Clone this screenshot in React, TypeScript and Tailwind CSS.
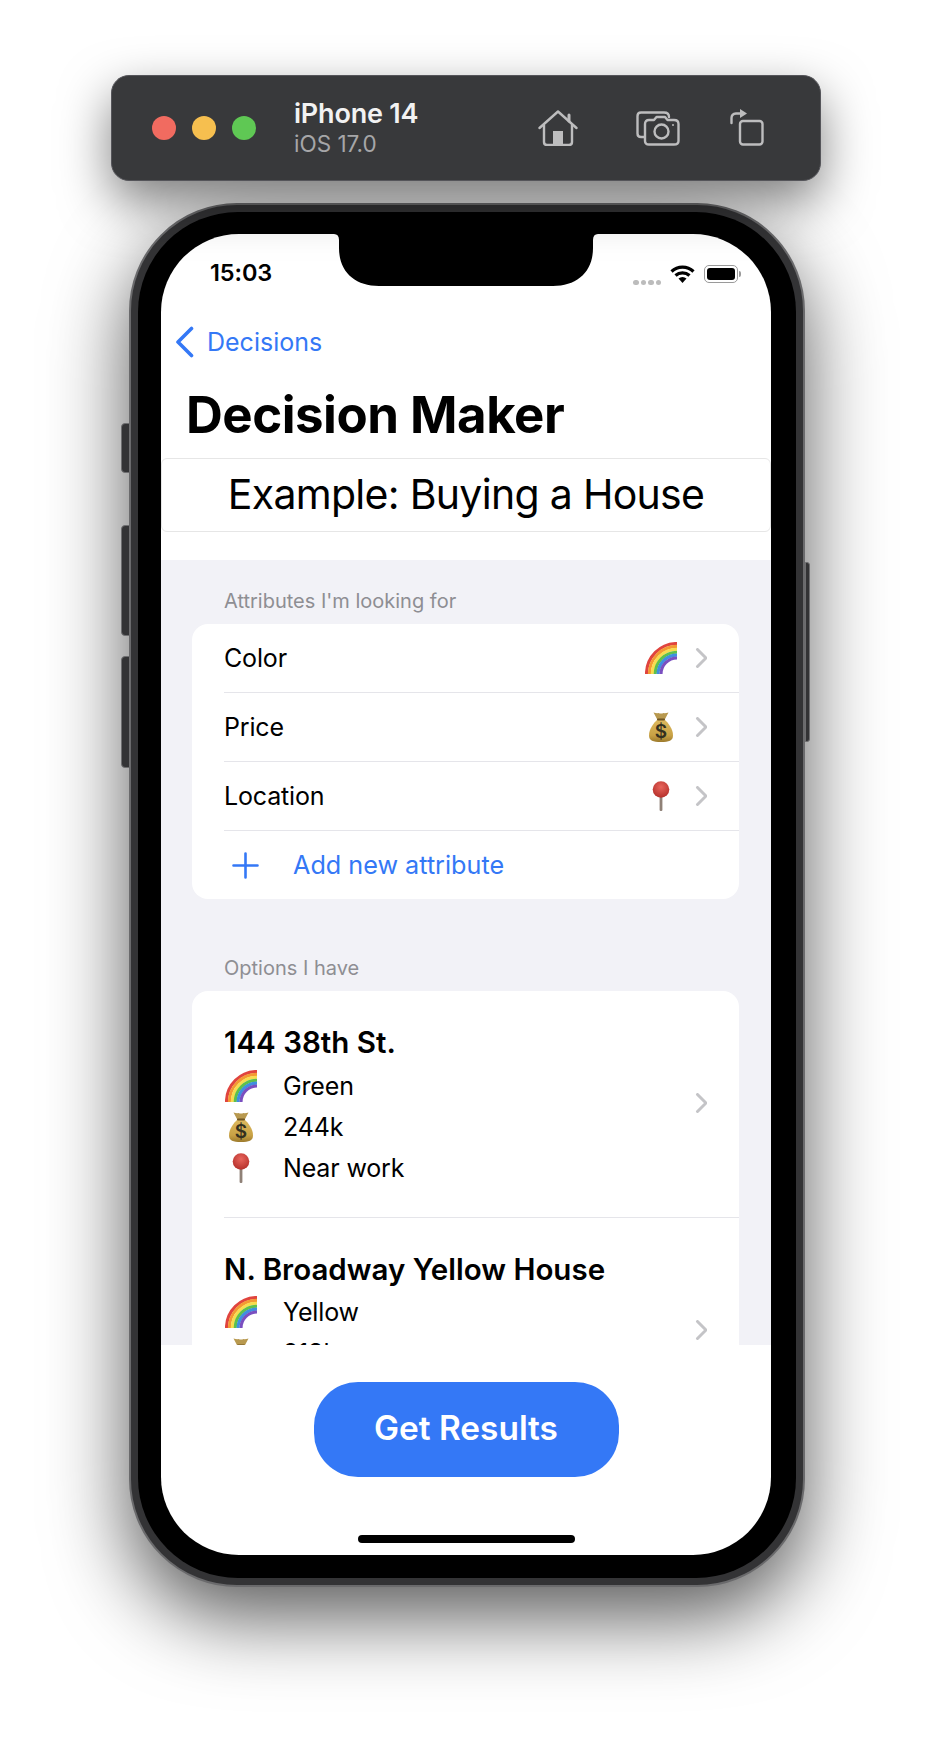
const BLUE = '#3478f6';

function Rainbow({ size = 32 }: { size?: number }) {
  const bands = ['#e0443e', '#f39a32', '#f7dc4f', '#5fc14b', '#3f8fe0', '#7a4fc0'];
  return (
    <svg width={size} height={size} viewBox="0 0 32 32" fill="none">
      {bands.map((color, i) => (
        <path
          key={color}
          d={`M${1.5 + i * 2.9} 32 A${30.5 - i * 2.9} ${30.5 - i * 2.9} 0 0 1 32 ${1.5 + i * 2.9}`}
          stroke={color}
          strokeWidth="3.1"
        />
      ))}
    </svg>
  );
}

function MoneyBag() {
  return (
    <svg width="24" height="30" viewBox="0 0 24 30">
      <defs>
        <linearGradient id="bag" x1="0" y1="0" x2="0" y2="1">
          <stop offset="0" stopColor="#dcb95f" />
          <stop offset="0.7" stopColor="#c9a245" />
          <stop offset="1" stopColor="#9c7a2c" />
        </linearGradient>
      </defs>
      <path d="M4.5 0.5 Q8 1.5 9.5 1 Q12 2 14.5 1 Q16 1.5 19.5 0.5 L15.5 8 L8.5 8 Z" fill="#b8994f" />
      <path d="M8.5 7.5 L15.5 7.5 C19.5 11 24 17 24 23.5 C24 28.5 20 30 12 30 C4 30 0 28.5 0 23.5 C0 17 4.5 11 8.5 7.5 Z" fill="url(#bag)" />
      <rect x="8" y="6.6" width="8" height="2" rx="1" fill="#6f5522" />
      <text x="12" y="26" textAnchor="middle" fontSize="19" fontWeight="600" fill="#33301f" fontFamily="Inter, sans-serif">$</text>
    </svg>
  );
}

function Pin() {
  return (
    <svg width="18" height="30" viewBox="0 0 18 30">
      <defs>
        <radialGradient id="pin" cx="0.5" cy="0.35" r="0.65">
          <stop offset="0" stopColor="#e8655c" />
          <stop offset="1" stopColor="#b5302b" />
        </radialGradient>
      </defs>
      <rect x="7.6" y="14" width="2.8" height="16" rx="1" fill="#8f8177" />
      <circle cx="9" cy="8.5" r="8.3" fill="url(#pin)" />
    </svg>
  );
}

function Chevron() {
  return (
    <svg width="12" height="20" viewBox="0 0 12 20" fill="none" className="shrink-0">
      <path d="M2.5 1.5 L11 10 L2.5 18.5" stroke="#c4c4c7" strokeWidth="3" strokeLinecap="round" strokeLinejoin="round" />
    </svg>
  );
}

function HomeIcon() {
  return (
    <svg width="40" height="36" viewBox="0 0 40 36" fill="none" stroke="#bdbdbe" strokeWidth="2.4" strokeLinecap="round" strokeLinejoin="round">
      <path d="M1.5 18 L20 1.5 L38.5 18" />
      <path d="M31 5 V11" strokeWidth="3" />
      <path d="M6 15 V32 Q6 35 9 35 H31 Q34 35 34 32 V15" />
      <rect x="15" y="21" width="10" height="13" fill="#bdbdbe" stroke="none" />
    </svg>
  );
}

function CameraIcon() {
  return (
    <svg width="44" height="35" viewBox="0 0 44 35" fill="none" stroke="#bdbdbe" strokeWidth="2.4" strokeLinecap="round" strokeLinejoin="round">
      <path d="M8 26 H5 Q1.5 26 1.5 22.5 V5 Q1.5 1.5 5 1.5 H28 Q33 1.5 33 6" />
      <path d="M13 9 H18 L20.5 6 H29 L31.5 9 H38 Q42.5 9 42.5 13 V30 Q42.5 33.5 38 33.5 H13 Q9 33.5 9 30 V13 Q9 9 13 9 Z" />
      <circle cx="25.5" cy="20.5" r="7" />
      <circle cx="37" cy="14" r="1" fill="#bdbdbe" stroke="none" />
    </svg>
  );
}

function RotateIcon() {
  return (
    <svg width="34" height="38" viewBox="0 0 34 38" fill="none" stroke="#bdbdbe" strokeWidth="2.4" strokeLinecap="round" strokeLinejoin="round">
      <rect x="10" y="13" width="22.5" height="23.5" rx="3" />
      <path d="M1.5 15 V10 Q1.5 6 6 5.5 H11" />
      <path d="M10 1 L17 5.5 L10 10 Z" fill="#bdbdbe" stroke="none" />
    </svg>
  );
}

function Toolbar() {
  return (
    <div className="relative z-10 flex h-[106px] w-[710px] items-center rounded-[18px] border border-[#55555a] bg-[#38393b] pl-[40px] shadow-[0_20px_50px_rgba(0,0,0,0.5)]">
      <div className="flex gap-4">
        <div className="size-6 rounded-full bg-[#f16b60]" />
        <div className="size-6 rounded-full bg-[#f6bf4f]" />
        <div className="size-6 rounded-full bg-[#5fc854]" />
      </div>
      <div className="ml-[38px] flex w-[130px] flex-col">
        <span className="text-[27px] leading-[32px] font-semibold tracking-[-0.2px] text-[#f2f2f2]">iPhone 14</span>
        <span className="text-[22.5px] leading-[28px] text-[#a6a6a8]">iOS 17.0</span>
      </div>
      <div className="ml-[114px]"><HomeIcon /></div>
      <div className="ml-[58px]"><CameraIcon /></div>
      <div className="-mt-[3px] ml-[50px]"><RotateIcon /></div>
    </div>
  );
}

function SideButtons() {
  return (
    <>
      <div className="absolute top-[218px] -left-[10px] h-[50px] w-[9px] rounded-l-[4px] border border-[#6e6e70] bg-[#333335]" />
      <div className="absolute top-[320px] -left-[10px] h-[111px] w-[9px] rounded-l-[4px] border border-[#6e6e70] bg-[#333335]" />
      <div className="absolute top-[451px] -left-[10px] h-[112px] w-[9px] rounded-l-[4px] border border-[#6e6e70] bg-[#333335]" />
      <div className="absolute top-[357px] -right-[7px] h-[180px] w-[5px] rounded-r-[3px] border border-[#6e6e70] bg-[#333335]" />
    </>
  );
}

function StatusBar() {
  return (
    <div className="flex h-[65px] shrink-0 items-end justify-between pr-[30px] pl-[49px]">
      <span className="mb-[12px] text-[23.5px] leading-[28px] font-semibold tracking-[-0.1px] text-black">15:03</span>
      <div className="mb-[14px] flex items-center">
        <div className="mt-[16px] mr-[9px] flex gap-[2px]">
          <div className="size-[5.5px] rounded-full bg-[#bcbcbc]" />
          <div className="size-[5.5px] rounded-full bg-[#bcbcbc]" />
          <div className="size-[5.5px] rounded-full bg-[#bcbcbc]" />
          <div className="size-[5.5px] rounded-full bg-[#bcbcbc]" />
        </div>
        <svg width="25" height="18" viewBox="0 0 25 18" fill="none" stroke="#000" strokeWidth="3.2">
          <path d="M1.5 6.5 A16 16 0 0 1 23.5 6.5" />
          <path d="M5.5 10.5 A10.5 10.5 0 0 1 19.5 10.5" />
          <path d="M12.5 18 L8.5 13.5 A6 6 0 0 1 16.5 13.5 Z" fill="#000" stroke="none" />
        </svg>
        <div className="ml-[9px] flex items-center">
          <div className="flex h-[18px] w-[34px] items-center rounded-[5px] border border-[#9a9a9a] p-[2px]">
            <div className="h-full w-full rounded-[3px] bg-black" />
          </div>
          <div className="ml-[1px] h-[6px] w-[2px] rounded-r-full bg-[#9a9a9a]" />
        </div>
      </div>
    </div>
  );
}

function AttributeRow({ label, icon }: { label: string; icon: React.ReactNode }) {
  return (
    <div className="ml-8 flex h-[69px] items-center border-b border-[#e5e5ea] pr-8">
      <span className="mt-[2px] flex-1 text-[25px] tracking-[-0.15px] text-black">{label}</span>
      <div className="mr-[18px] flex w-8 justify-center">{icon}</div>
      <Chevron />
    </div>
  );
}

function OptionLine({ icon, text }: { icon: React.ReactNode; text: string }) {
  return (
    <div className="flex h-[41px] items-center">
      <div className="-mt-[2px] flex w-[34px] justify-center">{icon}</div>
      <span className="ml-[25px] text-[25px] tracking-[-0.15px] text-black">{text}</span>
    </div>
  );
}

function OptionRow({ title, lines, last }: { title: string; lines: string[]; last?: boolean }) {
  return (
    <div className={`ml-8 flex items-center pt-[29px] pr-8 pb-[27.5px] ${last ? '' : 'border-b border-[#e5e5ea]'}`}>
      <div className="flex-1">
        <div className="mb-[2px] text-[29.5px] leading-[44px] font-semibold text-black">{title}</div>
        <OptionLine icon={<Rainbow />} text={lines[0]} />
        <OptionLine icon={<MoneyBag />} text={lines[1]} />
        <OptionLine icon={<Pin />} text={lines[2]} />
      </div>
      <div className="mb-[3px]"><Chevron /></div>
    </div>
  );
}

function Screen() {
  return (
    <div className="flex h-full flex-col overflow-hidden rounded-[78px] bg-white">
      <StatusBar />
      <div className="flex h-[86px] shrink-0 items-center gap-[13px] pl-[14px]">
        <svg width="19" height="32" viewBox="0 0 19 32" fill="none">
          <path d="M16.5 2.5 L3 16 L16.5 29.5" stroke={BLUE} strokeWidth="3.6" strokeLinecap="round" strokeLinejoin="round" />
        </svg>
        <span className="mt-[2px] text-[25px] text-[#3478f6]">Decisions</span>
      </div>
      <h1 className="h-[73px] shrink-0 pl-[25px] text-[51px] leading-[60px] font-bold tracking-[-0.5px] text-black">Decision Maker</h1>
      <div className="flex h-[74px] shrink-0 items-center justify-center rounded-[6px] border border-[#e6e6e6] text-[41px] tracking-[-0.7px] text-black">
        Example: Buying a House
      </div>
      <div className="h-[28px] shrink-0" />
      <div className="flex h-[785px] shrink-0 flex-col overflow-hidden bg-[#f2f2f7] pr-[32px] pl-[31px]">
        <div className="flex h-[64px] shrink-0 items-end pb-[9px] pl-8 text-[20px] leading-[28px] text-[#8e8e93]">
          Attributes I'm looking for
        </div>
        <div className="h-[275px] shrink-0 overflow-hidden rounded-[16px] bg-white">
          <AttributeRow label="Color" icon={<Rainbow />} />
          <AttributeRow label="Price" icon={<MoneyBag />} />
          <AttributeRow label="Location" icon={<Pin />} />
          <div className="flex h-[68px] items-center pl-[40px]">
            <svg width="27" height="27" viewBox="0 0 27 27" fill="none" stroke={BLUE} strokeWidth="2.6" strokeLinecap="round">
              <path d="M13.5 1.5 V25.5 M1.5 13.5 H25.5" />
            </svg>
            <span className="mt-[2px] ml-[34px] text-[25.2px] text-[#3478f6]">Add new attribute</span>
          </div>
        </div>
        <div className="flex h-[92px] shrink-0 items-end pb-[9px] pl-8 text-[20px] leading-[28px] text-[#8e8e93]">
          Options I have
        </div>
        <div className="shrink-0 rounded-[16px] bg-white">
          <OptionRow title="144 38th St." lines={['Green', '244k', 'Near work']} />
          <OptionRow title="N. Broadway Yellow House" lines={['Yellow', '213k', 'Far from work']} last />
        </div>
      </div>
      <div className="flex flex-1 flex-col items-center">
        <button className="mt-[37px] flex h-[95px] w-[305px] items-center justify-center rounded-[44px] bg-[#3478f6] pb-[2px] text-[33.4px] font-semibold text-white">
          Get Results
        </button>
        <div className="mt-[58px] h-2 w-[217px] rounded-full bg-black" />
      </div>
    </div>
  );
}

export default function App() {
  return (
    <div className="flex h-[1738px] w-[932px] flex-col items-center overflow-hidden bg-white pt-[75px] font-['Inter',sans-serif]">
      <Toolbar />
      <div className="relative mt-[22px] ml-[2px] h-[1384px] w-[676px] shrink-0 rounded-[108px] border-[2px] border-[#6a6a6c] bg-[#333335] p-[7px] shadow-[0_30px_80px_rgba(0,0,0,0.65)]">
        <SideButtons />
        <div className="h-full w-full rounded-[100px] bg-black pt-[22px] pr-[25px] pb-[23px] pl-[23px]">
          <Screen />
        </div>
        <svg width="264" height="54" viewBox="0 0 264 54" className="absolute top-[29px] left-[203px]">
          <path d="M0 0 Q5 0 5 6 V14 C5 38 21 52 45 52 H219 C243 52 259 38 259 14 V6 Q259 0 264 0 Z" fill="#000" />
        </svg>
      </div>
    </div>
  );
}
